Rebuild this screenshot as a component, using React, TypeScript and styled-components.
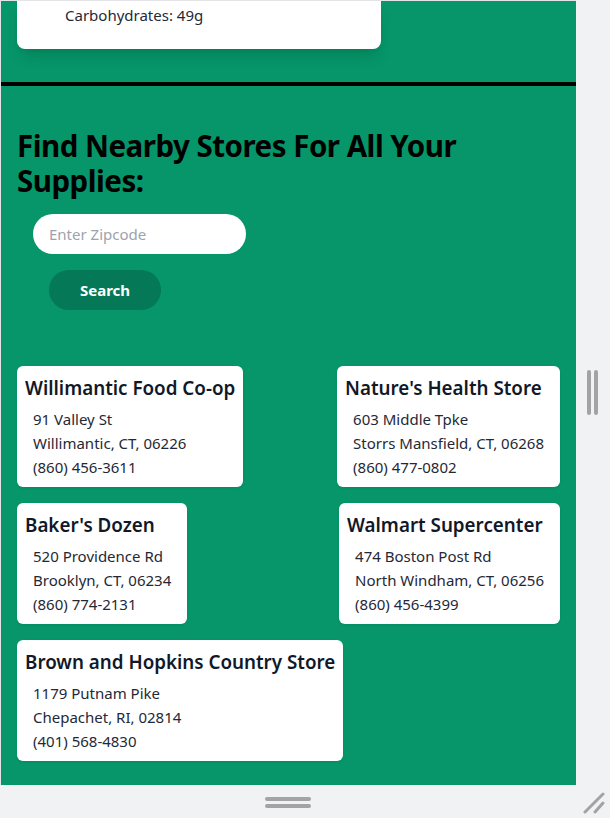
import React from "react";
import styled, { createGlobalStyle } from "styled-components";

const GlobalStyle = createGlobalStyle`
  html, body { margin: 0; padding: 0; height: 100%; }
  body { font-family: "Noto Sans", "Open Sans", sans-serif; background: #f1f2f4; }
  #root { height: 100%; }
  * { box-sizing: border-box; }
`;

const Shell = styled.div`
  display: grid;
  grid-template-columns: 1fr 34px;
  grid-template-rows: 1fr 33px;
  height: 100vh;
  background: #f1f2f4;
`;

const Preview = styled.div`
  grid-column: 1;
  grid-row: 1;
  background: #069669;
  border-left: 1px solid #e4e5e8;
  border-top: 1px solid #e4e5e8;
  overflow: hidden;
  color: #1f2937;
`;

const SideRail = styled.div`
  grid-column: 2;
  grid-row: 1;
  display: flex;
  align-items: center;
  justify-content: center;
  gap: 3px;
  padding-right: 1px;
`;

const VBar = styled.div`
  width: 4px;
  height: 45px;
  border-radius: 2px;
  background: #a3a3a3;
`;

const BottomRail = styled.div`
  grid-column: 1;
  grid-row: 2;
  display: flex;
  flex-direction: column;
  align-items: center;
  justify-content: center;
  gap: 3px;
  padding-top: 1px;
`;

const HBar = styled.div`
  width: 46px;
  height: 4px;
  border-radius: 2px;
  background: #a3a3a3;
`;

const Corner = styled.div`
  grid-column: 2;
  grid-row: 2;
  display: flex;
  align-items: flex-end;
  justify-content: flex-end;
  padding: 0 5px 4px 0;
`;

const NutritionWrap = styled.div`
  padding: 0 16px 33px;
`;

const NutritionCard = styled.div`
  width: 364px;
  background: #fff;
  border-radius: 0 0 8px 8px;
  box-shadow: 0 10px 15px -3px rgba(0, 0, 0, 0.12), 0 4px 6px -4px rgba(0, 0, 0, 0.1);
  padding: 2px 0 22px 48px;
  font-size: 15px;
  line-height: 24px;
`;

const Divider = styled.hr`
  margin: 0;
  border: none;
  border-top: 4px solid #000;
`;

const StoreSection = styled.section`
  padding: 42px 16px 23px;
`;

const Heading = styled.h2`
  margin: 0 0 16px;
  font-size: 29.5px;
  line-height: 35px;
  font-weight: 700;
  color: #000;
  letter-spacing: -0.5px;
`;

const ZipForm = styled.form`
  display: flex;
  flex-direction: column;
  align-items: flex-start;
  gap: 16px;
  padding-left: 16px;
`;

const ZipInput = styled.input`
  width: 213px;
  height: 40px;
  border: none;
  border-radius: 9999px;
  background: #fff;
  padding: 0 16px;
  font-family: inherit;
  font-size: 15px;
  color: #1f2937;
  outline: none;
  &::placeholder { color: #9ca3af; }
`;

const SearchButton = styled.button`
  margin-left: 16px;
  width: 112px;
  height: 40px;
  border: none;
  border-radius: 9999px;
  background: #057857;
  color: #fff;
  font-family: inherit;
  font-size: 15px;
  font-weight: 700;
`;

const StoreList = styled.div`
  margin-top: 56px;
  display: flex;
  flex-wrap: wrap;
  justify-content: space-between;
  row-gap: 16px;
`;

const StoreCard = styled.div`
  background: #fff;
  border-radius: 6px;
  padding: 8px;
  box-shadow: 0 1px 3px rgba(0, 0, 0, 0.08);
`;

const StoreName = styled.h3`
  margin: 0 0 5px;
  font-size: 18.8px;
  line-height: 28px;
  font-weight: 600;
  color: #111827;
  white-space: nowrap;
`;

const StoreLine = styled.p`
  margin: 0;
  padding: 0 8px;
  font-size: 15px;
  line-height: 24px;
  white-space: nowrap;
`;

const stores = [
  { name: "Willimantic Food Co-op", street: "91 Valley St", city: "Willimantic, CT, 06226", phone: "(860) 456-3611" },
  { name: "Nature's Health Store", street: "603 Middle Tpke", city: "Storrs Mansfield, CT, 06268", phone: "(860) 477-0802" },
  { name: "Baker's Dozen", street: "520 Providence Rd", city: "Brooklyn, CT, 06234", phone: "(860) 774-2131" },
  { name: "Walmart Supercenter", street: "474 Boston Post Rd", city: "North Windham, CT, 06256", phone: "(860) 456-4399" },
  { name: "Brown and Hopkins Country Store", street: "1179 Putnam Pike", city: "Chepachet, RI, 02814", phone: "(401) 568-4830" },
];

export default function App() {
  return (
    <>
      <GlobalStyle />
      <Shell>
        <Preview>
          <NutritionWrap>
            <NutritionCard>Carbohydrates: 49g</NutritionCard>
          </NutritionWrap>
          <Divider />
          <StoreSection>
            <Heading>Find Nearby Stores For All Your Supplies:</Heading>
            <ZipForm onSubmit={(e) => e.preventDefault()}>
              <ZipInput placeholder="Enter Zipcode" />
              <SearchButton type="submit">Search</SearchButton>
            </ZipForm>
            <StoreList>
              {stores.map((s) => (
                <StoreCard key={s.name}>
                  <StoreName>{s.name}</StoreName>
                  <StoreLine>{s.street}</StoreLine>
                  <StoreLine>{s.city}</StoreLine>
                  <StoreLine>{s.phone}</StoreLine>
                </StoreCard>
              ))}
            </StoreList>
          </StoreSection>
        </Preview>
        <SideRail>
          <VBar />
          <VBar />
        </SideRail>
        <BottomRail>
          <HBar />
          <HBar />
        </BottomRail>
        <Corner>
          <svg width="22" height="22" viewBox="0 0 22 22">
            <line x1="2" y1="20" x2="20" y2="2" stroke="#a3a3a3" strokeWidth="3" strokeLinecap="round" />
            <line x1="12" y1="20" x2="20" y2="11" stroke="#a3a3a3" strokeWidth="3" strokeLinecap="round" />
          </svg>
        </Corner>
      </Shell>
    </>
  );
}
